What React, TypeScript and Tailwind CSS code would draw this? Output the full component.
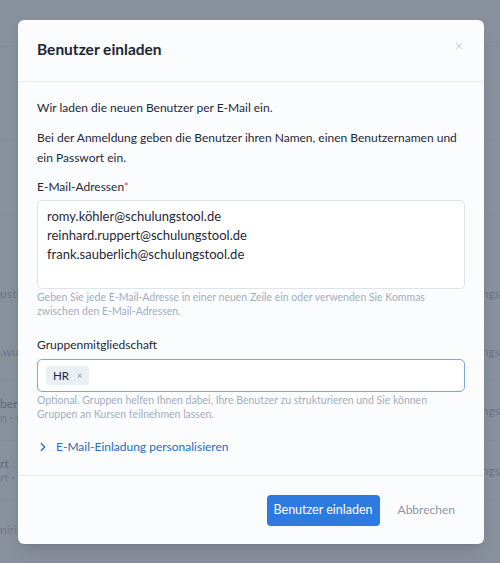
import { X, ChevronRight } from 'lucide-react';

// faint page content behind the overlay
const bgRows = [
  { left: 'usti', right: 'ngs', h: 'h-[58px]' },
  { left: '.wu', right: 'ngs', h: 'h-[58px]' },
  { left: 'berl', sub: 'n · fr', right: 'ngs', h: 'h-[60px]' },
  { left: 'rt', sub: 'rt · r', right: 'ngs', h: 'h-[60px]' },
];

function Background() {
  return (
    <div className="absolute inset-0 bg-white text-[12px] text-gray-700">
      <div className="h-[47px] border-b border-gray-300" />
      <div className="h-[93px] border-b border-gray-200" />
      <div className="h-[75px] border-b border-gray-200" />
      <div className="h-[50px]" />
      {bgRows.map((r, i) => (
        <div key={i} className={`${r.h} flex justify-between items-center border-b border-gray-200`}>
          <div className="leading-[14px]">
            <div className={r.sub ? 'font-semibold text-gray-900' : ''}>{r.left}</div>
            {r.sub && <div className="text-gray-500">{r.sub}</div>}
          </div>
          <div>{r.right}</div>
        </div>
      ))}
      <div className="pt-[20px] text-gray-500">niria</div>
    </div>
  );
}

export default function App() {
  return (
    <div className="relative w-[500px] h-[563px] overflow-hidden font-['Lato','Noto_Sans',sans-serif]">
      <Background />
      <div className="absolute inset-0 bg-[#737d8c]/85" />
      <div className="absolute left-[18px] top-[20px] w-[466px] h-[524px] rounded-[6px] bg-[#fbfcfd] shadow-lg flex flex-col">
        <div className="h-[62px] shrink-0 flex items-center justify-between pl-[19px] pr-[20px] border-b border-[#e6eaf0]">
          <h2 className="text-[15.5px] font-bold text-[#1c2536] mt-[-1px]">Benutzer einladen</h2>
          <X size={10} strokeWidth={2.5} className="text-[#c5cbd4] -mt-[9px]" />
        </div>
        <div className="flex-1 px-[19px] pt-[16px] text-[12px] text-[#1f2838]">
          <p className="leading-[20px]">Wir laden die neuen Benutzer per E-Mail ein.</p>
          <p className="leading-[20px] mt-[10px]">
            Bei der Anmeldung geben die Benutzer ihren Namen, einen Benutzernamen und ein Passwort ein.
          </p>
          <label className="block mt-[9px] leading-[20px] text-[12px]">
            E-Mail-Adressen<span className="text-[#e5484d]">*</span>
          </label>
          <div className="mt-[3px] h-[89px] rounded-[5px] border border-[#dfe3ea] bg-white px-[9px] pt-[6px] text-[13px] leading-[19px]">
            <div>romy.köhler@schulungstool.de</div>
            <div>reinhard.ruppert@schulungstool.de</div>
            <div>frank.sauberlich@schulungstool.de</div>
          </div>
          <p className="mt-[1px] text-[10.5px] leading-[14px] text-[#a4adbf]">
            Geben Sie jede E-Mail-Adresse in einer neuen Zeile ein oder verwenden Sie Kommas zwischen den E-Mail-Adressen.
          </p>
          <label className="block mt-[17px] leading-[20px] text-[12px]">Gruppenmitgliedschaft</label>
          <div className="mt-[4px] h-[33px] rounded-[5px] border border-[#7ea6dc] bg-white flex items-center px-[8px]">
            <span className="inline-flex items-center gap-[8px] h-[19px] px-[7px] rounded-[4px] bg-[#eaeff6] text-[11.5px] text-[#1f2838]">
              HR <span className="text-[9px] text-[#8b95a7]">×</span>
            </span>
          </div>
          <p className="mt-[1px] text-[10.5px] leading-[14px] text-[#a4adbf]">
            Optional. Gruppen helfen Ihnen dabei, Ihre Benutzer zu strukturieren und Sie können Gruppen an Kursen teilnehmen lassen.
          </p>
          <div className="mt-[16px] h-[20px] flex items-center gap-[6px] text-[12px] text-[#2a6bc9]">
            <ChevronRight size={14} strokeWidth={2.25} className="ml-[-1px]" />
            <span>E-Mail-Einladung personalisieren</span>
          </div>
        </div>
        <div className="h-[69px] shrink-0 border-t border-[#e6eaf0] flex items-center justify-end gap-[18px] pr-[29px]">
          <button className="h-[31px] w-[113px] rounded-[4px] bg-[#2d7ae0] text-white text-[12.5px]">Benutzer einladen</button>
          <button className="text-[12px] text-[#8b95a7]">Abbrechen</button>
        </div>
      </div>
    </div>
  );
}
